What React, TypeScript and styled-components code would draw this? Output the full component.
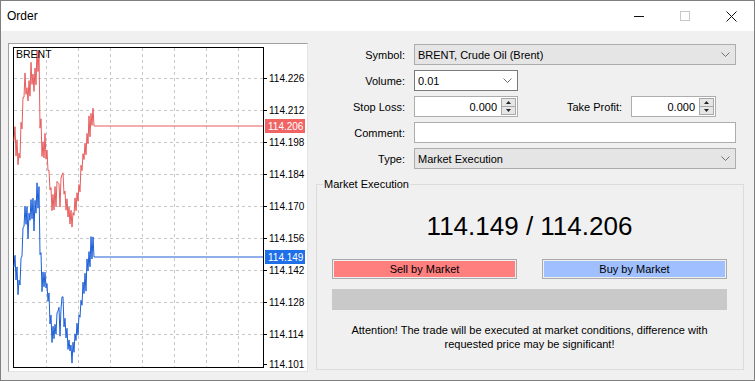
import React from 'react'
import styled, { createGlobalStyle } from 'styled-components'

const GlobalStyle = createGlobalStyle`
  html, body {
    margin: 0;
    padding: 0;
    background: #ffffff;
  }
  body {
    font-family: 'Liberation Sans', Arial, sans-serif;
    font-size: 11px;
    color: #000;
  }
`

const colors = {
  face: '#f0f0f0',
  border: '#adadad',
  ask: '#e85c5c',
  askBox: '#f06464',
  bid: '#1d5fd8',
  bidBox: '#1e6fe8',
  grid: '#c6c6c6',
}

// ---- chart data ----
const keys: [number, number][] = [
  [14, 128], [16, 142], [19, 160], [22, 118], [25, 80], [28, 96], [31, 74], [34, 86], [37, 62], [39, 64],
  [40, 118], [42, 148], [45, 146], [48, 166], [51, 192], [53, 204], [56, 198], [58, 176], [60, 202],
  [62, 162], [64, 190], [66, 200], [69, 214], [72, 222], [74, 210], [77, 204], [80, 180], [83, 160],
  [86, 146], [89, 130], [91, 118], [92, 116], [94, 124],
]

const baseY = (x: number) => {
  for (let i = 0; i < keys.length - 1; i++) {
    const [x0, y0] = keys[i]
    const [x1, y1] = keys[i + 1]
    if (x >= x0 && x <= x1) return y0 + ((y1 - y0) * (x - x0)) / (x1 - x0)
  }
  return keys[keys.length - 1][1]
}

const noise = (i: number) => {
  const s = Math.sin(i * 12.9898) * 43758.5453
  return s - Math.floor(s)
}

// jagged tick line: alternating spikes around the base curve
const makeLine = (shift: number, endY: number, seed: number) => {
  const pts: string[] = []
  for (let x = 14; x <= 93; x++) {
    const dir = x % 2 === 0 ? 1 : -1
    const y = Math.max(50, baseY(x) + dir * (3 + noise(x + seed) * 12) + shift)
    pts.push(`${x},${y.toFixed(1)}`)
  }
  pts.push(`94,${endY}`)
  pts.push(`263,${endY}`)
  return pts.join(' ')
}

const askLine = makeLine(0, 126, 0)
const bidLine = makeLine(131, 257, 3)

const gridY = [78, 110, 142, 174, 206, 238, 270, 302, 334]
const gridX = [46, 78, 110, 142, 174, 206, 238]
const axis: [string, number][] = [
  ['114.226', 78], ['114.212', 110], ['114.198', 142], ['114.184', 174], ['114.170', 206],
  ['114.156', 238], ['114.142', 270], ['114.128', 302], ['114.114', 334], ['114.101', 364],
]

const chartFont = "'Liberation Sans', Arial, sans-serif"

// ---- window ----
const Window = styled.div`
  width: 755px;
  height: 381px;
  box-sizing: border-box;
  border: 1px solid #7f7f7f;
  display: flex;
  flex-direction: column;
  background: ${colors.face};
`

const TitleBar = styled.div`
  height: 30px;
  background: #ffffff;
  display: flex;
  align-items: center;
`

const Title = styled.div`
  flex: 1;
  padding-left: 6px;
  font-size: 12px;
`

const CaptionButton = styled.div`
  width: 46px;
  height: 30px;
  display: flex;
  align-items: center;
  justify-content: center;
`

const Body = styled.div`
  flex: 1;
  display: flex;
  padding: 12px 0 0 7px;
`

const ChartFrame = styled.div`
  width: 300px;
  height: 329px;
  box-sizing: border-box;
  border: 1px solid;
  border-color: #a0a0a0 #e3e3e3 #e3e3e3 #a0a0a0;
  background: #ffffff;
`

const Form = styled.div`
  margin-left: 8px;
  width: 428px;
  display: flex;
  flex-direction: column;
`

const Fields = styled.div`
  display: grid;
  grid-template-columns: 89px 322px;
  column-gap: 9px;
  row-gap: 5px;
  margin-top: 1px;
  align-items: center;
`

const Label = styled.div`
  text-align: right;
  white-space: nowrap;
`

const Box = styled.div<{ $width?: number; $gray?: boolean; $dark?: boolean }>`
  height: 21px;
  box-sizing: border-box;
  width: ${(p) => (p.$width ? `${p.$width}px` : '100%')};
  border: 1px solid ${(p) => (p.$dark ? '#7a7a7a' : colors.border)};
  background: ${(p) => (p.$gray ? '#e5e5e5' : '#ffffff')};
  display: flex;
  align-items: center;
  padding-left: 3px;
`

const BoxText = styled.div<{ $right?: boolean }>`
  flex: 1;
  text-align: ${(p) => (p.$right ? 'right' : 'left')};
  padding-right: ${(p) => (p.$right ? '4px' : '0')};
`

const Chevron = styled.div`
  width: 17px;
  display: flex;
  justify-content: center;
  margin-right: 1px;
`

const Spin = styled.div`
  width: 15px;
  height: 17px;
  margin-right: 1px;
  display: flex;
  flex-direction: column;
  border: 1px solid #a8a8a8;
  box-sizing: border-box;
  background: #e6e6e6;
`

const SpinHalf = styled.div`
  flex: 1;
  display: flex;
  align-items: center;
  justify-content: center;
  & + & {
    border-top: 1px solid #a8a8a8;
  }
`

const SplitRow = styled.div`
  display: flex;
  align-items: center;
`

const TpLabel = styled(Label)`
  width: 104px;
  margin-right: 9px;
`

const Group = styled.fieldset`
  margin: 9px 0 0 0;
  padding: 0 16px 18px 15px;
  border: 1px solid #dcdcdc;
  display: flex;
  flex-direction: column;
`

const Legend = styled.legend`
  margin-left: -9px;
  padding: 0 1px;
  line-height: 13px;
`

const Price = styled.div`
  margin-top: 20px;
  text-align: center;
  font-size: 26px;
  line-height: 30px;
`

const Buttons = styled.div`
  margin-top: 18px;
  display: flex;
  justify-content: space-between;
`

const TradeButton = styled.div<{ $bg: string }>`
  width: 185px;
  height: 20px;
  box-sizing: border-box;
  border: 1px solid #a9a9a9;
  padding: 1px;
  background: ${colors.face};
  & > div {
    height: 100%;
    background: ${(p) => p.$bg};
    display: flex;
    align-items: center;
    justify-content: center;
  }
`

const Progress = styled.div`
  margin-top: 10px;
  height: 21px;
  background: #c9c9c9;
`

const Note = styled.div`
  margin-top: 13px;
  text-align: center;
  line-height: 14px;
`

const ChevronIcon = () => (
  <svg width="9" height="5" viewBox="0 0 9 5">
    <polyline points="0.5,0.5 4.5,4.5 8.5,0.5" fill="none" stroke="#707070" strokeWidth="1" />
  </svg>
)

const Spinner = () => (
  <Spin>
    <SpinHalf>
      <svg width="5" height="3" viewBox="0 0 5 3">
        <polygon points="0,3 2.5,0 5,3" fill="#222" />
      </svg>
    </SpinHalf>
    <SpinHalf>
      <svg width="5" height="3" viewBox="0 0 5 3">
        <polygon points="0,0 2.5,3 5,0" fill="#222" />
      </svg>
    </SpinHalf>
  </Spin>
)

const Chart = () => (
  <svg width="298" height="327" viewBox="9 44 298 327" style={{ display: 'block' }}>
    {gridY.map((y) => (
      <line key={`h${y}`} x1={14} x2={263} y1={y + 0.5} y2={y + 0.5} stroke={colors.grid} strokeDasharray="3,3" />
    ))}
    {gridX.map((x) => (
      <line key={`v${x}`} x1={x + 0.5} x2={x + 0.5} y1={48} y2={367} stroke={colors.grid} strokeDasharray="3,3" />
    ))}
    <rect x={13.5} y={47.5} width={250} height={320} fill="none" stroke="#000" />
    {axis.map(([t, y]) => (
      <g key={t}>
        <line x1={264} x2={267} y1={y + 0.5} y2={y + 0.5} stroke="#000" />
        <text x={269} y={y + 4} fontSize="10" fontFamily={chartFont} fill="#000">
          {t}
        </text>
      </g>
    ))}
    <polyline points={askLine} fill="none" stroke={colors.ask} strokeWidth="1" />
    <polyline points={bidLine} fill="none" stroke={colors.bid} strokeWidth="1" />
    <rect x={265} y={119} width={40} height={14} fill={colors.askBox} />
    <text x={268} y={130} fontSize="10" fontFamily={chartFont} fill="#fff">
      114.206
    </text>
    <rect x={265} y={250} width={40} height={14} fill={colors.bidBox} />
    <text x={268} y={261} fontSize="10" fontFamily={chartFont} fill="#fff">
      114.149
    </text>
    <text x={16} y={58} fontSize="10.5" fontFamily={chartFont} fill="#000">
      BRENT
    </text>
  </svg>
)

export default function App() {
  return (
    <>
      <GlobalStyle />
      <Window>
        <TitleBar>
          <Title>Order</Title>
          <CaptionButton>
            <svg width="10" height="10" viewBox="0 0 10 10">
              <line x1="0" x2="10" y1="5.5" y2="5.5" stroke="#111" />
            </svg>
          </CaptionButton>
          <CaptionButton>
            <svg width="10" height="10" viewBox="0 0 10 10">
              <rect x="0.5" y="0.5" width="9" height="9" fill="none" stroke="#c8c8c8" />
            </svg>
          </CaptionButton>
          <CaptionButton>
            <svg width="11" height="11" viewBox="0 0 11 11">
              <path d="M0.5 0.5 L10.5 10.5 M10.5 0.5 L0.5 10.5" stroke="#111" strokeWidth="1" />
            </svg>
          </CaptionButton>
        </TitleBar>
        <Body>
          <ChartFrame>
            <Chart />
          </ChartFrame>
          <Form>
            <Fields>
              <Label>Symbol:</Label>
              <Box $gray>
                <BoxText>BRENT, Crude Oil (Brent)</BoxText>
                <Chevron>
                  <ChevronIcon />
                </Chevron>
              </Box>
              <Label>Volume:</Label>
              <Box $width={104} $dark>
                <BoxText>0.01</BoxText>
                <Chevron>
                  <ChevronIcon />
                </Chevron>
              </Box>
              <Label>Stop Loss:</Label>
              <SplitRow>
                <Box $width={104}>
                  <BoxText $right>0.000</BoxText>
                  <Spinner />
                </Box>
                <TpLabel>Take Profit:</TpLabel>
                <Box $width={85}>
                  <BoxText $right>0.000</BoxText>
                  <Spinner />
                </Box>
              </SplitRow>
              <Label>Comment:</Label>
              <Box />
              <Label>Type:</Label>
              <Box $gray>
                <BoxText>Market Execution</BoxText>
                <Chevron>
                  <ChevronIcon />
                </Chevron>
              </Box>
            </Fields>
            <Group>
              <Legend>Market Execution</Legend>
              <Price>114.149 / 114.206</Price>
              <Buttons>
                <TradeButton $bg="#ff7f7f">
                  <div>Sell by Market</div>
                </TradeButton>
                <TradeButton $bg="#9fbfff">
                  <div>Buy by Market</div>
                </TradeButton>
              </Buttons>
              <Progress />
              <Note>
                Attention! The trade will be executed at market conditions, difference with
                <br />
                requested price may be significant!
              </Note>
            </Group>
          </Form>
        </Body>
      </Window>
    </>
  )
}
